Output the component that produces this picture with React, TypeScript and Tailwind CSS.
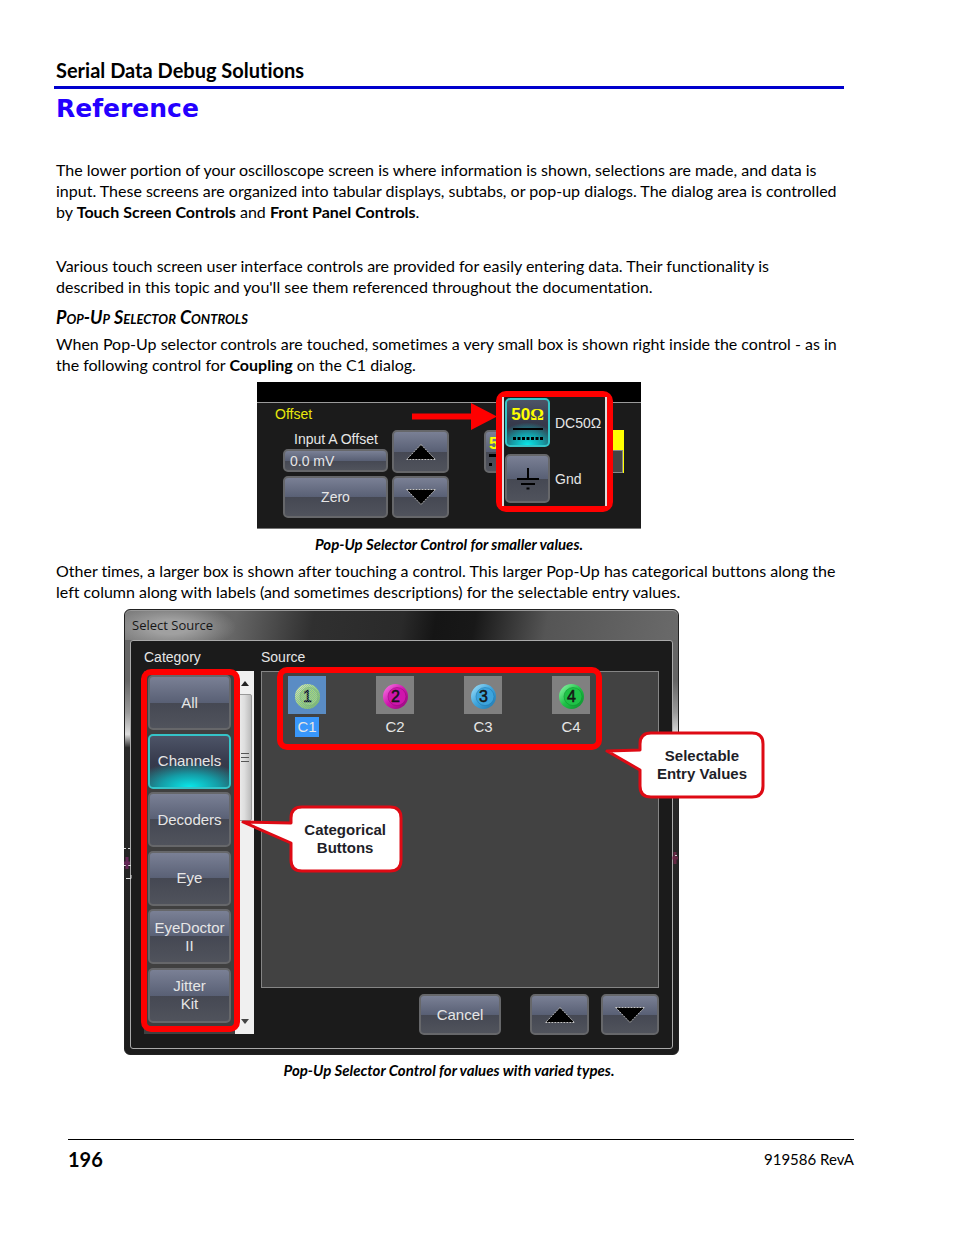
import { useState } from 'react'
import type { ReactNode } from 'react'
import clsx from 'clsx'

const BEVEL =
  'rounded-[5px] border-2 border-[#66676a] bg-[linear-gradient(#7a8095_0%,#596075_50%,#454853_50%,#50535c_100%)]'

const BEVEL_ACTIVE =
  'rounded-[5px] border-2 border-[#35c4c8] bg-[radial-gradient(ellipse_75%_50%_at_50%_100%,#08e8ea_0%,#159ba5_50%,transparent_100%),linear-gradient(#4d5467_0%,#373b4d_50%,#333743_100%)]'

const CATEGORIES = ['All', 'Channels', 'Decoders', 'Eye', 'EyeDoctor\nII', 'Jitter\nKit']

const SOURCES = [
  { id: 1, light: '#dcf5a8', mid: '#a8dc74', dark: '#7cba5e' },
  { id: 2, light: '#f36ade', mid: '#cf16ad', dark: '#8f0877' },
  { id: 3, light: '#8fd6f5', mid: '#3da4dc', dark: '#1d74ac' },
  { id: 4, light: '#7df09a', mid: '#1fc247', dark: '#0b8b2b' },
]

function Triangle({ down }: { down?: boolean }) {
  return (
    <svg width="32" height="18" viewBox="0 0 32 18" aria-hidden="true">
      <path
        d={down ? 'M1.5 1.5H30.5L16 16.5Z' : 'M16 1.5L30.5 16.5H1.5Z'}
        fill="#000"
        stroke="#c4c4c4"
        strokeWidth="1"
        strokeDasharray="2 1"
      />
    </svg>
  )
}

function ArrowButton({ down, className }: { down?: boolean; className: string }) {
  return (
    <button aria-label={down ? 'Down' : 'Up'} className={clsx('grid place-items-center', BEVEL, className)}>
      <Triangle down={down} />
    </button>
  )
}

function Callout({
  width,
  path,
  className,
  children,
}: {
  width: number
  path: string
  className: string
  children: ReactNode
}) {
  return (
    <div className={clsx('absolute flex h-[68px] items-center justify-end', className)}>
      <svg className="absolute inset-0" width={width} height="68" aria-hidden="true">
        <path d={path} fill="#fff" stroke="#de0a14" strokeWidth="3" strokeLinejoin="round" />
      </svg>
      <p className="relative text-center text-[15px] leading-[18px] font-bold text-[#1e1e28]">{children}</p>
    </div>
  )
}

function CouplingDialog() {
  return (
    <div className="relative mx-auto h-[147px] w-[384px] border-b border-[#777] bg-[#1b1b1b] font-['Liberation_Sans',sans-serif] text-sm text-[#e6e6e6]">
      <div className="h-[21px] border-b border-[#9a9a9a] bg-black" />
      <h4 className="h-[27px] pl-[18px] leading-[23px] text-[#e8e80c]">Offset</h4>
      <div className="flex gap-1 pl-[26px]">
        <div className="flex w-[105px] flex-col">
          <label htmlFor="offset" className="h-[19px] pl-[11px] leading-[18px] whitespace-nowrap">
            Input A Offset
          </label>
          <input
            id="offset"
            defaultValue="0.0 mV"
            className={clsx('mb-1 h-[23px] w-full px-[5px] text-sm outline-none', BEVEL)}
          />
          <button className={clsx('h-[42px]', BEVEL)}>Zero</button>
        </div>
        <div className="flex w-[57px] flex-col gap-[3px]">
          <ArrowButton className="h-[43px]" />
          <ArrowButton down className="h-[42px]" />
        </div>
        <div className="ml-[31px] flex h-[43px] w-[140px]">
          <div className={clsx('w-10 pt-[2px] pl-[3px]', BEVEL)}>
            <span className="block text-[17px] leading-5 font-bold text-[#ff0]">5</span>
            <span className="block w-7 border-t-3 border-black" />
            <span className="mt-[6px] block w-7 border-t-3 border-dotted border-black" />
          </div>
          <div className="flex-1 border-r border-[#ff0]">
            <div className="h-5 bg-[#ff0]" />
            <div className="h-[23px] border border-[#888] bg-[#444]" />
          </div>
        </div>
      </div>

      {/* Pop-up over the coupling control */}
      <div className="absolute top-[9px] left-[239px] h-[121px] w-[117px] rounded-[10px] border-6 border-[#f00] bg-[#1b1b1b]">
        <div className="flex h-full flex-col gap-[7px] border-x-2 border-[#ddd] pt-px pl-px">
          <div className="flex items-center gap-[5px]">
            <button aria-label="DC50Ω" className={clsx('h-[49px] w-[45px] shrink-0', BEVEL_ACTIVE)}>
              <span className="block text-[17px] leading-5 font-bold text-[#ff0]">
                50<span className="font-['Liberation_Serif',serif]">Ω</span>
              </span>
              <span className="mx-auto mt-[3px] block w-[30px] border-t-2 border-black" />
              <svg className="mx-auto mt-[7px] block" width="30" height="3" aria-hidden="true">
                <path d="M0 1.5H30" stroke="#000" strokeWidth="3" strokeDasharray="3 1.5" />
              </svg>
            </button>
            <span>DC50Ω</span>
          </div>
          <div className="flex items-center gap-[5px]">
            <button aria-label="Gnd" className={clsx('grid h-[49px] w-[45px] shrink-0 place-items-center', BEVEL)}>
              <svg width="22" height="22" viewBox="0 0 22 22" aria-hidden="true">
                <path d="M11 0V11M0 11H22M4 16H18M9.5 20.5H12.5" stroke="#000" strokeWidth="2" />
              </svg>
            </button>
            <span>Gnd</span>
          </div>
        </div>
      </div>
      <svg className="absolute top-5 left-[155px]" width="86" height="30" aria-hidden="true">
        <path d="M0 11.5H59V1L85 14.5L59 28V17.5H0Z" fill="#f00" />
      </svg>
    </div>
  )
}

function SourceIcon({ source, selected }: { source: (typeof SOURCES)[number]; selected: boolean }) {
  const gradient = `ball-${source.id}`
  return (
    <svg width="38" height="38" viewBox="0 0 38 38" aria-hidden="true">
      <defs>
        <linearGradient id={gradient} x1="0" y1="0" x2="1" y2="1">
          <stop offset="0.1" stopColor={source.light} />
          <stop offset="0.5" stopColor={source.mid} />
          <stop offset="1" stopColor={source.dark} />
        </linearGradient>
        <pattern id="selection-dots" width="2" height="2" patternUnits="userSpaceOnUse">
          <path d="M0 0H1V1H0ZM1 1H2V2H1Z" fill="#5a8cc4" />
        </pattern>
      </defs>
      <circle cx="19.5" cy="20.5" r="12.5" fill={`url(#${gradient})`} />
      <circle cx="21" cy="20.5" r="9" fill={source.mid} stroke={source.dark} strokeOpacity="0.5" />
      <text x="19.5" y="26" textAnchor="middle" fontSize="16" fill="#151515" stroke="#151515" strokeWidth="0.5">
        {source.id}
      </text>
      {selected && <circle cx="19.5" cy="20.5" r="12.5" fill="url(#selection-dots)" opacity="0.5" />}
    </svg>
  )
}

function SourceDialog() {
  const [category, setCategory] = useState('Channels')
  const [selected, setSelected] = useState(1)

  return (
    <div className="relative mx-auto w-[650px] font-['Liberation_Sans',sans-serif] text-[#e6e6e6]">
      <div className="w-[555px] rounded-md border border-[#222] bg-[linear-gradient(to_bottom,#666_0%,#666_16%,#999_23%,#ddd_28%,#2a2a2a_31%,#1c1c1c_100%)]">
        <div className="flex h-[30px] items-center rounded-t-md border-t border-[#999] bg-[radial-gradient(ellipse_66px_24px_at_45px_16px,#a0a0a0_30%,transparent_100%),linear-gradient(100deg,#777_0%,#666_20%,#303030_34%,#2a2a2a_50%,#151515_56%,#181818_63%,#555_76%,#6a6a6a_100%)] pl-[7px] font-['Open_Sans',sans-serif] text-[13px] text-[#161616]">
          Select Source
        </div>
        <div className="mx-[5px] mb-[5px] rounded-[3px] border border-[#aaa] bg-[#1b1b1b] pr-[13px] pb-[13px] pl-[13px]">
          <div className="flex gap-[7px]">
            <section className="w-[110px]">
              <h4 className="h-[30px] text-sm leading-8">Category</h4>
              <div className="flex h-[363px] bg-[#404040]">
                <div className="flex flex-1 flex-col justify-between pt-1 pr-1 pb-[11px] pl-1">
                  {CATEGORIES.map((name) => (
                    <button
                      key={name}
                      onClick={() => setCategory(name)}
                      className={clsx(
                        'h-[55px] text-[15px] leading-[18px] whitespace-pre-line',
                        name === category ? BEVEL_ACTIVE : BEVEL,
                      )}
                    >
                      {name}
                    </button>
                  ))}
                </div>
                {/* Scroll bar */}
                <div className="flex w-[19px] flex-col items-center justify-between bg-[#f0f0f0] py-[10px]">
                  <svg width="8" height="5" aria-hidden="true">
                    <path d="M4 0L8 5H0Z" fill="#222" />
                  </svg>
                  <div className="mt-2 mb-auto grid h-[127px] w-[15px] place-items-center rounded-[2px] border border-[#999] bg-[linear-gradient(to_right,#eee,#ddd_50%,#bbb)]">
                    <span className="h-[9px] w-2 border-y border-[#555] bg-[linear-gradient(transparent_3px,#555_3px,#555_4px,transparent_4px)]" />
                  </div>
                  <svg width="8" height="5" aria-hidden="true">
                    <path d="M0 0H8L4 5Z" fill="#444" />
                  </svg>
                </div>
              </div>
            </section>
            <section className="flex-1">
              <h4 className="h-[30px] text-sm leading-8">Source</h4>
              <div className="flex h-[317px] gap-[50px] border border-[#858585] bg-[#424242] pt-1 pl-[26px]">
                {SOURCES.map((source) => (
                  <button
                    key={source.id}
                    onClick={() => setSelected(source.id)}
                    className="flex h-[62px] w-[38px] flex-col items-center gap-[3px]"
                  >
                    <span className={source.id === selected ? 'bg-[#5a8cc4]' : 'bg-[#808080]'}>
                      <SourceIcon source={source} selected={source.id === selected} />
                    </span>
                    <span
                      className={clsx('w-6 text-center text-[15px] leading-5', source.id === selected && 'bg-[#3997fb]')}
                    >
                      C{source.id}
                    </span>
                  </button>
                ))}
              </div>
              <div className="mt-[6px] flex justify-end">
                <button className={clsx('mr-[29px] h-[41px] w-[82px] text-[15px]', BEVEL)}>Cancel</button>
                <ArrowButton className="mr-3 h-[41px] w-[59px]" />
                <ArrowButton down className="h-[41px] w-[58px]" />
              </div>
            </section>
          </div>
        </div>
      </div>

      {/* Trace fragments showing at the window edges */}
      <svg className="absolute top-[236px] left-0" width="8" height="34" aria-hidden="true">
        <path d="M0 3.5H2M4 3.5H6M0 20.5H2M4 20.5H7M2 33.5H7V30" stroke="#ddd" fill="none" />
        <path d="M3 12V24M0 18H6" stroke="#8f2a78" strokeWidth="3" strokeOpacity="0.6" />
      </svg>
      <svg className="absolute top-[240px] left-[547px]" width="8" height="20" aria-hidden="true">
        <path d="M4 3V15M1 9H7" stroke="#8f2a58" strokeWidth="3" strokeOpacity="0.6" />
        <path d="M4 6.5H6" stroke="#ccc" />
      </svg>

      {/* Highlights and callouts */}
      <div className="pointer-events-none absolute top-[60px] left-[17px] h-[363px] w-[99px] rounded-[10px] border-6 border-[#f00]" />
      <div className="pointer-events-none absolute top-[58px] left-[153px] h-[83px] w-[325px] rounded-[10px] border-6 border-[#f00]" />
      <Callout
        width={166}
        className="top-[196px] left-[114px] w-[166px] pr-[18px]"
        path="M64 2H152Q163 2 163 13V55Q163 66 152 66H64Q53 66 53 55V38L5 17L53 18V13Q53 2 64 2Z"
      >
        Categorical
        <br />
        Buttons
      </Callout>
      <Callout
        width={164}
        className="top-[122px] left-[479px] w-[164px] pr-[20px]"
        path="M48 2H149Q160 2 160 13V55Q160 66 149 66H48Q37 66 37 55V39L4 20L37 19V13Q37 2 48 2Z"
      >
        Selectable
        <br />
        Entry Values
      </Callout>
    </div>
  )
}

export default function App() {
  return (
    <div className="min-h-screen bg-white pb-16 font-[Lato,sans-serif] text-base leading-[21px] text-black [font-variant-ligatures:none]">
      <main className="pt-14 pr-[110px] pl-[54px]">
        <header className="h-[33px] border-b-3 border-[#0000cd] pl-[2px] text-xl leading-7 font-bold">
          Serial Data Debug Solutions
        </header>
        <h1 className="pt-1 pl-[2px] font-['DejaVu_Sans',sans-serif] text-[25px] leading-8 font-bold text-[#2400ff]">
          Reference
        </h1>
        <div className="pl-[2px] whitespace-nowrap">
          <p className="mt-[34px]">
            The lower portion of your oscilloscope screen is where information is shown, selections are made, and data is
            <br />
            input. These screens are organized into tabular displays, subtabs, or pop-up dialogs. The dialog area is
            controlled
            <br />
            by <b>Touch Screen Controls</b> and <b>Front Panel Controls</b>.
          </p>
          <p className="mt-[33px]">
            Various touch screen user interface controls are provided for easily entering data. Their functionality is
            <br />
            described in this topic and you'll see them referenced throughout the documentation.
          </p>
          <h2 className="mt-[10px] text-lg leading-[21px] font-bold italic [font-variant-caps:small-caps]">
            Pop-Up Selector Controls
          </h2>
          <p className="mt-[5px]">
            When Pop-Up selector controls are touched, sometimes a very small box is shown right inside the control - as in
            <br />
            the following control for <b>Coupling</b> on the C1 dialog.
          </p>
        </div>
        <figure className="mt-[7px]">
          <CouplingDialog />
          <figcaption className="mt-[5px] text-center text-[15px] leading-[21px] font-bold italic">
            Pop-Up Selector Control for smaller values.
          </figcaption>
        </figure>
        <p className="mt-[5px] pl-[2px] whitespace-nowrap">
          Other times, a larger box is shown after touching a control. This larger Pop-Up has categorical buttons along the
          <br />
          left column along with labels (and sometimes descriptions) for the selectable entry values.
        </p>
        <figure className="mt-[7px]">
          <SourceDialog />
          <figcaption className="mt-[5px] text-center text-[15px] leading-[21px] font-bold italic">
            Pop-Up Selector Control for values with varied types.
          </figcaption>
        </figure>
      </main>
      <footer className="mt-[58px] mr-[100px] ml-[68px] flex items-center justify-between border-t border-black pt-[5px]">
        <span className="text-xl leading-7 font-bold">196</span>
        <span className="text-[15px]">919586 RevA</span>
      </footer>
    </div>
  )
}
